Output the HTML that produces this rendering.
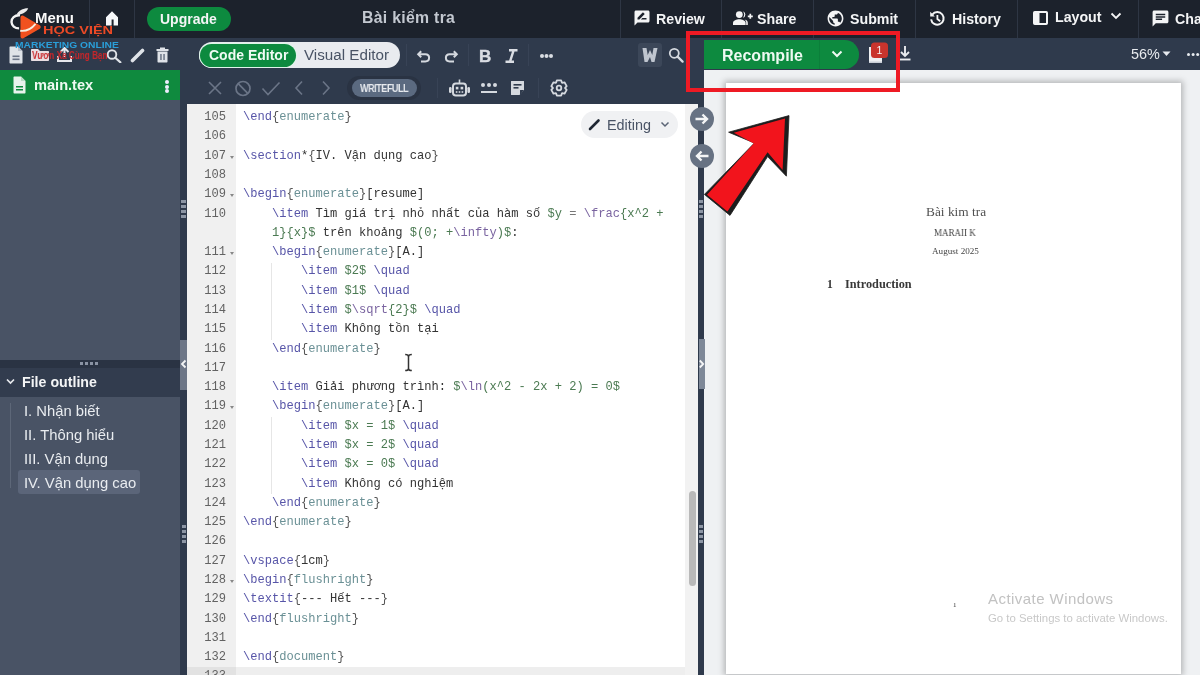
<!DOCTYPE html>
<html><head><meta charset="utf-8">
<style>
*{margin:0;padding:0;box-sizing:border-box}
html,body{width:1200px;height:675px;overflow:hidden;background:#2f3a4c;font-family:"Liberation Sans",sans-serif;-webkit-font-smoothing:antialiased}
body>*{will-change:transform}
.a{position:absolute}
#top{left:0;top:0;width:1200px;height:38px;background:#1c222c}
.vd{position:absolute;top:0;width:1px;height:38px;background:#2e3644}
.tb{position:absolute;color:#f4f5f6;font-weight:bold;font-size:15px;white-space:nowrap}
#side{left:0;top:38px;width:180px;height:637px;background:#495365}
#stool{left:0;top:38px;width:180px;height:32px;background:#2f3a4c}
#mainrow{left:0;top:70px;width:180px;height:30px;background:#0f8a3e}
#strip{left:180px;top:38px;width:7px;height:637px;background:#2f3a4c}
#etool{left:187px;top:38px;width:511px;height:66px;background:#2f3a4c}
#editor{left:187px;top:104px;width:511px;height:571px;background:#fff;overflow:hidden}
#gutter{left:0;top:0;width:49px;height:571px;background:#f0f0f0}
#vtrack{left:498px;top:0;width:13px;height:571px;background:#f2f2f2}
#div2{left:698px;top:38px;width:6px;height:637px;background:#2f3a4c}
#ptool{left:704px;top:38px;width:496px;height:32px;background:#2f3a4c}
#pview{left:704px;top:70px;width:496px;height:605px;background:#eff1f3}
#page{left:726px;top:83px;width:455px;height:591px;background:#fff;box-shadow:0 0 6px 2px rgba(0,0,0,.25)}
#gl{left:1px;top:4.2px;width:49px}
#cd{left:56px;top:4.2px;width:440px}
.ln,.cl{height:19.29px;line-height:19.29px;font-family:"Liberation Mono",monospace;font-size:12.08px;white-space:pre}
.ln{color:#626262;text-align:right;padding-right:11px;position:relative}
.fd{position:absolute;right:3px;top:9px;width:0;height:0;border-left:2.5px solid transparent;border-right:2.5px solid transparent;border-top:3px solid #888}
.cl{color:#333}
.k{color:#5755a8}.b{color:#555}.e{color:#6a9095}.m{color:#4b7a52}.mk{color:#7a64a0}.o{color:#777}
.act{left:0;width:498px;height:19.29px;background:#eeeeee}
.ol{position:absolute;left:24px;height:22px;line-height:20px;font-size:14.8px;color:#e9ecf0;white-space:nowrap}
</style></head><body>
<div id="top" class="a">
<div class="vd" style="left:89px"></div><div class="vd" style="left:134px"></div>
<div class="vd" style="left:620px"></div><div class="vd" style="left:721px"></div><div class="vd" style="left:813px"></div><div class="vd" style="left:915px"></div><div class="vd" style="left:1017px"></div><div class="vd" style="left:1138px"></div>
<svg class="a" style="left:104px;top:10px" width="16" height="16" viewBox="0 0 16 16"><path d="M2 7.2L8 1.3l6 5.9V15.5H9.6V9.5H7.6v6H2z" fill="#f6f8fa"/></svg>
<div class="a" style="left:147px;top:7px;width:84px;height:24px;border-radius:12px;background:#0d8a3f"></div>
<div class="tb" style="left:160px;top:8.8px;font-size:14px;line-height:20px">Upgrade</div>
<div class="tb" style="left:362px;top:6.8px;font-size:15.8px;line-height:22px;color:#c3c8d0;letter-spacing:0.3px">Bài kiểm tra</div>
<svg class="a" style="left:633px;top:9px" width="18" height="18" viewBox="0 0 24 24"><path fill="#f4f5f6" d="M20 2H4c-1.1 0-1.99.9-1.99 2L2 22l4-4h14c1.1 0 2-.9 2-2V4c0-1.1-.9-2-2-2zM6 14v-2.47l6.88-6.88c.2-.2.51-.2.71 0l1.770 1.77c.2.2.2.51 0 .71L8.47 14H6zm12 0h-7.5l2-2H18v2z"/></svg>
<div class="tb" style="left:656px;top:9px;font-size:14.2px;line-height:20px">Review</div>
<svg class="a" style="left:732px;top:10px" width="21" height="16" viewBox="0 0 21 16"><path d="M10.800 1.200a3.400 3.400 0 0 1 0 6.600 4.600 4.600 0 0 0 0-6.600z" fill="#f4f5f6"/><circle cx="7.300" cy="4.600" r="3.400" fill="#f4f5f6"/><path d="M1 15v-2.200c0-2.200 3.600-3.500 6.300-3.500s6.300 1.300 6.300 3.500V15z" fill="#f4f5f6"/><path d="M12.600 9.600c1.800.4 3.200 1.500 3.200 3.200V15h-1.600v-2.200c0-1.300-.6-2.400-1.600-3.200z" fill="#f4f5f6"/><path d="M18.300 3.800v5M15.800 6.300h5" stroke="#f4f5f6" stroke-width="1.7"/></svg>
<div class="tb" style="left:757px;top:9px;font-size:14.2px;line-height:20px">Share</div>
<svg class="a" style="left:826px;top:9px" width="19" height="19" viewBox="0 0 24 24"><path fill="#f4f5f6" d="M12 2C6.48 2 2 6.48 2 12s4.48 10 10 10 10-4.48 10-10S17.52 2 12 2zm-1 17.930c-3.95-.49-7-3.85-7-7.93 0-.62.08-1.21.21-1.79L9 15v1c0 1.1.9 2 2 2v1.93zm6.9-2.54c-.26-.81-1-1.39-1.9-1.39h-1v-3c0-.55-.45-1-1-1H8v-2h2c.55 0 1-.45 1-1V7h2c1.1 0 2-.9 2-2v-.41c2.93 1.19 5 4.06 5 7.41 0 2.08-.8 3.97-2.1 5.39z"/></svg>
<div class="tb" style="left:850px;top:9px;font-size:14.2px;line-height:20px">Submit</div>
<svg class="a" style="left:929px;top:10px" width="17" height="17" viewBox="0 0 17 17"><path d="M3.300 4.600A6.300 6.300 0 1 1 2.100 9.300" fill="none" stroke="#f4f5f6" stroke-width="2"/><path d="M1.200 1.800v4.600h4.600z" fill="#f4f5f6"/><path d="M8.400 5v4l2.800 2.200" fill="none" stroke="#f4f5f6" stroke-width="1.8"/></svg>
<div class="tb" style="left:952px;top:9px;font-size:14.2px;line-height:20px">History</div>
<svg class="a" style="left:1033px;top:11px" width="15" height="14" viewBox="0 0 15 14"><rect x="1" y="1" width="13" height="12" rx="0.8" fill="none" stroke="#f4f5f6" stroke-width="2"/><rect x="1" y="1" width="5.5" height="12" fill="#f4f5f6"/></svg>
<div class="tb" style="left:1055px;top:7px;font-size:14.2px;line-height:20px">Layout</div>
<svg class="a" style="left:1110px;top:12px" width="12" height="8" viewBox="0 0 12 8"><path d="M1.5 1.5l4.5 4.5 4.5-4.5" fill="none" stroke="#f4f5f6" stroke-width="1.8"/></svg>
<svg class="a" style="left:1151px;top:9px" width="19" height="19" viewBox="0 0 24 24"><path fill="#f4f5f6" d="M20 2H4c-1.1 0-1.99.9-1.99 2L2 22l4-4h14c1.1 0 2-.9 2-2V4c0-1.1-.9-2-2-2zM6 9h12v2H6V9zm8 5H6v-2h8v2zm4-6H6V6h12v2z"/></svg>
<div class="tb" style="left:1175px;top:9px;font-size:14.2px;line-height:20px">Chat</div>
</div>

<div id="side" class="a"></div>
<div id="stool" class="a"></div>
<div id="mainrow" class="a"></div>
<!-- sidebar toolbar icons -->
<svg class="a" style="left:9px;top:46px" width="14" height="18" viewBox="0 0 14 18"><path d="M1.5 0.5h7.5l4.5 4.5v11.5c0 .6-.4 1-1 1h-11c-.6 0-1-.4-1-1v-15c0-.6.4-1 1-1z" fill="#dfe3e8"/><path d="M9 .5v4.5h4.5" fill="#b9c0ca"/><rect x="3.5" y="9.5" width="7" height="1.6" fill="#6b7587"/><rect x="3.5" y="12.5" width="7" height="1.6" fill="#6b7587"/></svg>
<svg class="a" style="left:31px;top:49px" width="18" height="12" viewBox="0 0 18 12"><path d="M1 0h6l2 2h8c.6 0 1 .4 1 1v8c0 .6-.4 1-1 1H1c-.6 0-1-.4-1-1V1c0-.6.4-1 1-1z" fill="#e9dfe3"/></svg>
<svg class="a" style="left:57px;top:47px" width="15" height="15" viewBox="0 0 15 15"><path d="M7.5 1v9M3.5 5l4-4 4 4" fill="none" stroke="#e6e8ec" stroke-width="2"/><path d="M1 9v5h13V9" fill="none" stroke="#e6e8ec" stroke-width="2"/></svg>
<svg class="a" style="left:106px;top:49px" width="16" height="14" viewBox="0 0 16 14"><circle cx="6" cy="5.5" r="4.3" fill="none" stroke="#dfe3e8" stroke-width="1.9"/><path d="M9.2 8.7l5.2 4.6" stroke="#dfe3e8" stroke-width="2.2" stroke-linecap="round"/></svg>
<svg class="a" style="left:130px;top:47px" width="17" height="16" viewBox="0 0 17 16"><path d="M2.5 13.5L12.5 3.5" stroke="#dfe3e8" stroke-width="3.6" stroke-linecap="round"/></svg>
<svg class="a" style="left:156px;top:47px" width="13" height="16" viewBox="0 0 13 16"><rect x="0.5" y="2" width="12" height="2" fill="#dfe3e8"/><rect x="4" y="0.5" width="5" height="2" fill="#dfe3e8"/><path d="M1.5 4.5h10v10c0 .6-.4 1-1 1h-8c-.6 0-1-.4-1-1z" fill="#dfe3e8"/><rect x="4.2" y="7" width="1.5" height="6" fill="#6b7587"/><rect x="7.3" y="7" width="1.5" height="6" fill="#6b7587"/></svg>
<!-- main.tex row -->
<svg class="a" style="left:13px;top:76px" width="13" height="18" viewBox="0 0 13 18"><path d="M1.5 .5h6.5l4.5 4.5v11.5c0 .6-.4 1-1 1h-10c-.6 0-1-.4-1-1v-15c0-.6.4-1 1-1z" fill="#e8f3ec"/><path d="M8 .5v4.5h4.5" fill="#b8dcc6"/><rect x="3" y="10" width="7" height="1.5" fill="#0f8a3e"/><rect x="3" y="13" width="7" height="1.5" fill="#0f8a3e"/></svg>
<div class="tb" style="left:34px;top:76px;font-size:14.6px;line-height:18px;color:#eefaf2">main.tex</div>
<div class="a" style="left:165px;top:80px;width:3.5px;height:3.5px;border-radius:2px;background:#eef"></div>
<div class="a" style="left:165px;top:84.5px;width:3.5px;height:3.5px;border-radius:2px;background:#eef"></div>
<div class="a" style="left:165px;top:89px;width:3.5px;height:3.5px;border-radius:2px;background:#eef"></div>
<!-- outline -->
<div class="a" style="left:0;top:360px;width:180px;height:8px;background:#2a3343"></div>
<div class="a" style="left:80px;top:362px;width:18px;height:3px;background:repeating-linear-gradient(90deg,#8a93a3 0 3px,transparent 3px 5px)"></div>
<div class="a" style="left:0;top:368px;width:180px;height:29px;background:#323c4e"></div>
<svg class="a" style="left:6px;top:378px" width="9" height="7" viewBox="0 0 9 7"><path d="M1 1.5l3.5 3.5 3.5-3.5" fill="none" stroke="#e6e8ec" stroke-width="1.7"/></svg>
<div class="tb" style="left:22px;top:373px;font-size:14.2px;line-height:18px;color:#f4f5f6">File outline</div>
<div class="a" style="left:10px;top:403px;width:1px;height:85px;background:#5d6778"></div>
<div class="a" style="left:18px;top:470px;width:122px;height:24px;border-radius:3px;background:#5b6579"></div>
<div class="ol" style="top:401px">I. Nhận biết</div>
<div class="ol" style="top:425px">II. Thông hiểu</div>
<div class="ol" style="top:449px">III. Vận dụng</div>
<div class="ol" style="top:473px">IV. Vận dụng cao</div>
<!-- logo watermark -->
<svg class="a" style="left:0;top:0" width="50" height="42" viewBox="0 0 50 42"><path d="M20 15.300C14.500 14.800 11.300 18.300 11.500 22c.2 3.600 3.300 6.400 7.600 6.400" fill="none" stroke="#f4f4f4" stroke-width="2.4"/><path d="M16.500 14.800c1.800-4.200 6.500-6.600 11.700-6.500-1.600 3.900-6.400 6.600-11.700 6.500z" fill="#ececec"/><path d="M20.500 17.500c0-1.700 1.500-2.500 2.900-1.700l16.300 9.400c1.400.8 1.400 2.700 0 3.500l-16.300 9.500c-1.400.8-2.900 0-2.900-1.700z" fill="#f1511f"/><path d="M20.200 30.800c5.500.6 10.800-1.300 15.300-7" fill="none" stroke="#f6eee0" stroke-width="1.9"/></svg>
<div class="tb" style="left:35px;top:9px;font-size:14.5px;line-height:18px;color:#fafafa;letter-spacing:0px;transform-origin:0 0;transform:scaleX(1.03)">Menu</div>
<div class="a" style="left:43px;top:25px;font-size:10px;line-height:11px;font-weight:bold;color:#ec4a26;white-space:nowrap;transform-origin:0 0;transform:scaleX(1.45)">HỌC VIỆN</div>
<div class="a" style="left:15px;top:40px;font-size:9.6px;line-height:10px;font-weight:bold;color:#2a9ed8;white-space:nowrap;transform-origin:0 0;transform:scaleX(1.07)">MARKETING ONLINE</div>
<div class="a" style="left:32px;top:49px;font-size:10.5px;line-height:12px;font-weight:bold;color:#c8262a;white-space:nowrap;transform-origin:0 0;transform:scaleX(0.78)">Vươn Xa Cùng Bạn</div>

<div id="strip" class="a"></div>
<div id="etool" class="a"></div>
<!-- toggle -->
<div class="a" style="left:199px;top:42px;width:201px;height:26px;border-radius:13px;background:#e9ebef"></div>
<div class="a" style="left:200px;top:43.5px;width:96px;height:23px;border-radius:12px;background:#0d8a3f;box-shadow:0 0 0 1px #dff5ea"></div>
<div class="tb" style="left:209px;top:46px;font-size:14px;line-height:18px;color:#f0fbf4">Code Editor</div>
<div class="a" style="left:304px;top:46px;font-size:15.2px;line-height:18px;color:#495365;white-space:nowrap">Visual Editor</div>
<div class="a" style="left:406px;top:44px;width:1px;height:22px;background:#384356"></div>
<svg class="a" style="left:416px;top:50px" width="16" height="13" viewBox="0 0 16 13"><path d="M5.2 1.2L2.2 4.2l3 3" fill="none" stroke="#d5d9df" stroke-width="2"/><path d="M2.5 4.2h6.8c2.300 0 3.8 1.600 3.8 3.6s-1.5 3.6-3.8 3.6H5" fill="none" stroke="#d5d9df" stroke-width="2"/></svg>
<svg class="a" style="left:443px;top:50px" width="16" height="13" viewBox="0 0 16 13"><path d="M10.8 1.2l3 3-3 3" fill="none" stroke="#d5d9df" stroke-width="2"/><path d="M13.5 4.2H6.7C4.4 4.2 2.900 5.8 2.900 7.8s1.5 3.6 3.8 3.6H11" fill="none" stroke="#d5d9df" stroke-width="2"/></svg>
<div class="a" style="left:468px;top:44px;width:1px;height:22px;background:#384356"></div>
<div class="a" style="left:479px;top:47px;font-size:17px;line-height:20px;font-weight:bold;color:#dadde3;-webkit-text-stroke:0.4px #dadde3">B</div>
<svg class="a" style="left:504px;top:49px" width="15" height="14" viewBox="0 0 15 14"><path d="M5 1.3h8.5M1.5 12.7H10M9.600 1.300l-3.6 11.4" fill="none" stroke="#dadde3" stroke-width="2.4"/></svg>
<div class="a" style="left:528px;top:44px;width:1px;height:22px;background:#384356"></div>
<div class="a" style="left:540px;top:53.8px;width:3.6px;height:3.6px;border-radius:2px;background:#dadde3;box-shadow:4.5px 0 0 #dadde3,9px 0 0 #dadde3"></div>
<div class="a" style="left:638px;top:43px;width:24px;height:24px;border-radius:3px;background:#3c4759"></div>
<svg class="a" style="left:641px;top:46px" width="18" height="18" viewBox="0 0 18 18"><path d="M1.5 2h4l1.2 7 2.3-5 2.300 5 1.2-7h4l-3 14h-3L9 11l-2.500 5h-3z" fill="#bfc5cf"/></svg>
<svg class="a" style="left:668px;top:47px" width="16" height="16" viewBox="0 0 16 16"><circle cx="6.3" cy="6.3" r="4.5" fill="none" stroke="#d5d9df" stroke-width="1.8"/><path d="M9.6 9.6l5 5" stroke="#d5d9df" stroke-width="2.2" stroke-linecap="round"/></svg>
<!-- row 2 -->
<svg class="a" style="left:207px;top:80px" width="16" height="16" viewBox="0 0 16 16"><path d="M2 2l12 12M14 2L2 14" stroke="#6b7587" stroke-width="1.6"/></svg>
<svg class="a" style="left:234px;top:80px" width="18" height="17" viewBox="0 0 18 17"><circle cx="9" cy="8.5" r="7" fill="none" stroke="#6b7587" stroke-width="1.7"/><path d="M4.2 3.7l9.6 9.6" stroke="#6b7587" stroke-width="1.7"/></svg>
<svg class="a" style="left:261px;top:81px" width="20" height="15" viewBox="0 0 20 15"><path d="M1.5 7.5l5.5 6L18.500 1.5" fill="none" stroke="#6b7587" stroke-width="1.6"/></svg>
<svg class="a" style="left:293px;top:80px" width="12" height="16" viewBox="0 0 12 16"><path d="M9 1.5L3 8l6 6.5" fill="none" stroke="#6b7587" stroke-width="1.6"/></svg>
<svg class="a" style="left:320px;top:80px" width="12" height="16" viewBox="0 0 12 16"><path d="M3 1.5L9 8l-6 6.5" fill="none" stroke="#6b7587" stroke-width="1.6"/></svg>
<div class="a" style="left:347px;top:76px;width:74px;height:24px;border-radius:12px;background:#2a3343"></div>
<div class="a" style="left:352px;top:79px;width:65px;height:18px;border-radius:9px;background:#5b6a80"></div>
<div class="a" style="left:360px;top:82px;font-size:10.6px;line-height:12px;color:#e8ebef;white-space:nowrap;letter-spacing:-0.5px;font-weight:bold;transform-origin:0 0;transform:scaleX(0.85)">WRITEFULL</div>
<div class="a" style="left:437px;top:78px;width:1px;height:20px;background:#384356"></div>
<svg class="a" style="left:448px;top:79px" width="23" height="18" viewBox="0 0 23 18"><rect x="5" y="4.5" width="13" height="12" rx="2.8" fill="none" stroke="#d5d9df" stroke-width="2"/><rect x="1" y="8" width="2.6" height="6" rx="1.2" fill="#d5d9df"/><rect x="19.4" y="8" width="2.6" height="6" rx="1.2" fill="#d5d9df"/><rect x="10.7" y="0.5" width="1.6" height="4" fill="#d5d9df"/><rect x="7.8" y="7.8" width="2.6" height="2.6" fill="#d5d9df"/><rect x="12.6" y="7.8" width="2.6" height="2.6" fill="#d5d9df"/><rect x="7.8" y="12.2" width="1.6" height="1.6" fill="#d5d9df"/><rect x="10.7" y="12.2" width="1.6" height="1.6" fill="#d5d9df"/><rect x="13.6" y="12.2" width="1.6" height="1.6" fill="#d5d9df"/></svg>
<svg class="a" style="left:480px;top:81px" width="18" height="14" viewBox="0 0 18 14"><circle cx="3" cy="4" r="2" fill="#d5d9df"/><circle cx="9" cy="4" r="2" fill="#d5d9df"/><circle cx="15" cy="4" r="2" fill="#d5d9df"/><rect x="1" y="10" width="16" height="2" fill="#d5d9df"/></svg>
<svg class="a" style="left:510px;top:80px" width="15" height="16" viewBox="0 0 15 16"><path d="M1.5 1h12c.5 0 .5.5.5.5V10l-4.5 5H1.5c-.5 0-.5-.5-.5-.5V1.5c0-.5.5-.5.5-.5z" fill="#d5d9df"/><rect x="3.5" y="4" width="8" height="1.6" fill="#2f3a4c"/><rect x="3.5" y="7" width="5" height="1.6" fill="#2f3a4c"/><path d="M14 10h-3.5c-.5 0-.5.5-.5.5V15z" fill="#2f3a4c"/></svg>
<div class="a" style="left:538px;top:78px;width:1px;height:20px;background:#384356"></div>
<svg class="a" style="left:550px;top:79px" width="18" height="18" viewBox="0 0 18 18"><path d="M6.08 3.65 L6.82 1.41 L11.18 1.41 L11.92 3.65 L12.17 3.79 L14.48 3.31 L16.67 7.09 L15.10 8.86 L15.10 9.14 L16.67 10.91 L14.48 14.69 L12.17 14.21 L11.92 14.35 L11.18 16.59 L6.82 16.59 L6.08 14.35 L5.83 14.21 L3.52 14.69 L1.33 10.91 L2.90 9.14 L2.90 8.86 L1.33 7.09 L3.52 3.31 L5.83 3.79Z" fill="none" stroke="#d5d9df" stroke-width="1.8" stroke-linejoin="round"/><circle cx="9" cy="9" r="2.3" fill="none" stroke="#d5d9df" stroke-width="1.8"/></svg>

<div id="editor" class="a"><div id="gutter" class="a"></div>
<div class="a act" style="top:563.2px"></div><div class="a" style="left:0;top:563.2px;width:49px;height:19.3px;background:#e2e2e2"></div>
<div class="a" style="left:84px;top:158.5px;width:1px;height:77.2px;background:#e6e6e6"></div>
<div class="a" style="left:84px;top:312.8px;width:1px;height:77.2px;background:#e6e6e6"></div>
<div id="gl" class="a">
<div class="ln">105</div>
<div class="ln">106</div>
<div class="ln">107<i class="fd"></i></div>
<div class="ln">108</div>
<div class="ln">109<i class="fd"></i></div>
<div class="ln">110</div>
<div class="ln"></div>
<div class="ln">111<i class="fd"></i></div>
<div class="ln">112</div>
<div class="ln">113</div>
<div class="ln">114</div>
<div class="ln">115</div>
<div class="ln">116</div>
<div class="ln">117</div>
<div class="ln">118</div>
<div class="ln">119<i class="fd"></i></div>
<div class="ln">120</div>
<div class="ln">121</div>
<div class="ln">122</div>
<div class="ln">123</div>
<div class="ln">124</div>
<div class="ln">125</div>
<div class="ln">126</div>
<div class="ln">127</div>
<div class="ln">128<i class="fd"></i></div>
<div class="ln">129</div>
<div class="ln">130</div>
<div class="ln">131</div>
<div class="ln">132</div>
<div class="ln">133</div>
</div>
<div id="cd" class="a">
<div class="cl"><span class="k">\end</span><span class="b">{</span><span class="e">enumerate</span><span class="b">}</span>&#8203;</div>
<div class="cl">&#8203;</div>
<div class="cl"><span class="k">\section</span>*<span class="b">{</span>IV. Vận dụng cao<span class="b">}</span>&#8203;</div>
<div class="cl">&#8203;</div>
<div class="cl"><span class="k">\begin</span><span class="b">{</span><span class="e">enumerate</span><span class="b">}</span>[resume]&#8203;</div>
<div class="cl">    <span class="k">\item</span> Tìm giá trị nhỏ nhất của hàm số <span class="m">$y </span><span class="o">= </span><span class="mk">\frac</span><span class="m">{x^2 +</span>&#8203;</div>
<div class="cl">    <span class="m">1}{x}$</span> trên khoảng <span class="m">$(0; +</span><span class="mk">\infty</span><span class="m">)$</span>:&#8203;</div>
<div class="cl">    <span class="k">\begin</span><span class="b">{</span><span class="e">enumerate</span><span class="b">}</span>[A.]&#8203;</div>
<div class="cl">        <span class="k">\item</span> <span class="m">$2$</span> <span class="k">\quad</span>&#8203;</div>
<div class="cl">        <span class="k">\item</span> <span class="m">$1$</span> <span class="k">\quad</span>&#8203;</div>
<div class="cl">        <span class="k">\item</span> <span class="m">$</span><span class="mk">\sqrt</span><span class="m">{2}$</span> <span class="k">\quad</span>&#8203;</div>
<div class="cl">        <span class="k">\item</span> Không tồn tại&#8203;</div>
<div class="cl">    <span class="k">\end</span><span class="b">{</span><span class="e">enumerate</span><span class="b">}</span>&#8203;</div>
<div class="cl">&#8203;</div>
<div class="cl">    <span class="k">\item</span> Giải phương trình: <span class="m">$</span><span class="mk">\ln</span><span class="m">(x^2 - 2x + 2) = 0$</span>&#8203;</div>
<div class="cl">    <span class="k">\begin</span><span class="b">{</span><span class="e">enumerate</span><span class="b">}</span>[A.]&#8203;</div>
<div class="cl">        <span class="k">\item</span> <span class="m">$x = 1$</span> <span class="k">\quad</span>&#8203;</div>
<div class="cl">        <span class="k">\item</span> <span class="m">$x = 2$</span> <span class="k">\quad</span>&#8203;</div>
<div class="cl">        <span class="k">\item</span> <span class="m">$x = 0$</span> <span class="k">\quad</span>&#8203;</div>
<div class="cl">        <span class="k">\item</span> Không có nghiệm&#8203;</div>
<div class="cl">    <span class="k">\end</span><span class="b">{</span><span class="e">enumerate</span><span class="b">}</span>&#8203;</div>
<div class="cl"><span class="k">\end</span><span class="b">{</span><span class="e">enumerate</span><span class="b">}</span>&#8203;</div>
<div class="cl">&#8203;</div>
<div class="cl"><span class="k">\vspace</span><span class="b">{</span>1cm<span class="b">}</span>&#8203;</div>
<div class="cl"><span class="k">\begin</span><span class="b">{</span><span class="e">flushright</span><span class="b">}</span>&#8203;</div>
<div class="cl"><span class="k">\textit</span><span class="b">{</span>--- Hết ---<span class="b">}</span>&#8203;</div>
<div class="cl"><span class="k">\end</span><span class="b">{</span><span class="e">flushright</span><span class="b">}</span>&#8203;</div>
<div class="cl">&#8203;</div>
<div class="cl"><span class="k">\end</span><span class="b">{</span><span class="e">document</span><span class="b">}</span>&#8203;</div>
<div class="cl">&#8203;</div>
</div>
<div id="vtrack" class="a"></div></div>
<div id="div2" class="a"></div>
<div id="ptool" class="a"></div>
<div class="a" style="left:704px;top:40px;width:155px;height:28.6px;border-radius:0 14.3px 14.3px 0;background:#0d8a3f"></div>
<div class="a" style="left:819px;top:40px;width:1px;height:29px;background:#0b7f3a"></div>
<div class="tb" style="left:721.5px;top:45.5px;font-size:16px;line-height:19px;color:#eefaf2">Recompile</div>
<svg class="a" style="left:831px;top:50px" width="12" height="8" viewBox="0 0 12 8"><path d="M1.5 1.5l4.5 4.5 4.5-4.5" fill="none" stroke="#eefaf2" stroke-width="2"/></svg>
<svg class="a" style="left:868px;top:42px" width="22" height="23" viewBox="0 0 22 23"><path d="M1 5h13v16H1z" fill="#eef0f3"/><path d="M1 19.5h13V21H1z" fill="#c9ced6"/><rect x="3" y="0.5" width="17" height="15.5" rx="3.5" fill="#c9342d"/><text x="11.5" y="11.5" font-size="10.5" font-family="Liberation Sans" fill="#f4f4f4" text-anchor="middle">1</text></svg>
<svg class="a" style="left:898px;top:45px" width="14" height="17" viewBox="0 0 14 17"><path d="M7 1v10M3 7l4 4 4-4" fill="none" stroke="#e8ebef" stroke-width="1.9"/><path d="M1.5 14.5h11" stroke="#e8ebef" stroke-width="1.9"/></svg>
<div class="a" style="left:1131px;top:45px;font-size:14.4px;line-height:19px;color:#e8ebef;white-space:nowrap">56%</div>
<svg class="a" style="left:1162px;top:51px" width="9" height="6" viewBox="0 0 9 6"><path d="M0.5 0.5h8L4.5 5z" fill="#e8ebef"/></svg>
<div class="a" style="left:1187px;top:53px;width:3.2px;height:3.2px;border-radius:2px;background:#e8ebef;box-shadow:4.6px 0 0 #e8ebef,9.2px 0 0 #e8ebef"></div>
<div id="pview" class="a"></div>
<div id="page" class="a"></div>
<div class="a" style="left:926px;top:204.5px;font-family:'Liberation Serif',serif;font-size:12.6px;line-height:14px;color:#505050;white-space:nowrap;transform-origin:0 0;transform:scaleX(1.06)">Bài kim tra</div>
<div class="a" style="left:933.5px;top:227.5px;font-family:'Liberation Serif',serif;font-size:9.6px;line-height:10px;color:#444;white-space:nowrap;transform-origin:0 0;transform:scaleX(0.94)">MARAII K</div>
<div class="a" style="left:932px;top:247px;font-family:'Liberation Serif',serif;font-size:8.3px;line-height:10px;color:#444;white-space:nowrap;transform-origin:0 0;transform:scaleX(1.1)">August 2025</div>
<div class="a" style="left:827px;top:277.5px;font-family:'Liberation Serif',serif;font-size:11.6px;line-height:13px;color:#383838;font-weight:bold;white-space:nowrap">1</div>
<div class="a" style="left:845px;top:277.5px;font-family:'Liberation Serif',serif;font-size:11.6px;line-height:13px;color:#383838;font-weight:bold;white-space:nowrap;transform-origin:0 0;transform:scaleX(1.06)">Introduction</div>
<div class="a" style="left:953px;top:601px;font-family:'Liberation Serif',serif;font-size:7px;line-height:8px;color:#333">1</div>
<div class="a" style="left:988px;top:590px;font-size:15px;line-height:18px;color:#c2c2c2;white-space:nowrap;letter-spacing:0.45px">Activate Windows</div>
<div class="a" style="left:988px;top:610.5px;font-size:11.4px;line-height:14px;color:#c8c8c8;white-space:nowrap">Go to Settings to activate Windows.</div>

<!-- strip handles -->
<div class="a" style="left:181px;top:200px;width:5px;height:18px;background:repeating-linear-gradient(180deg,#8d96a5 0 3px,transparent 3px 5px)"></div>
<div class="a" style="left:180px;top:339.5px;width:7px;height:49.5px;background:#6d7687"></div>
<svg class="a" style="left:180px;top:359px" width="7" height="10" viewBox="0 0 7 10"><path d="M5.5 1.5L2 5l3.5 3.5" fill="none" stroke="#f4f5f6" stroke-width="1.8"/></svg>
<div class="a" style="left:181.5px;top:525px;width:4px;height:18px;background:repeating-linear-gradient(180deg,#8d96a5 0 3px,transparent 3px 5px)"></div>
<!-- editor right divider handles -->
<div class="a" style="left:699px;top:200px;width:4px;height:18px;background:repeating-linear-gradient(180deg,#8d96a5 0 3px,transparent 3px 5px)"></div>
<div class="a" style="left:698.5px;top:339px;width:6px;height:50px;background:#7e8898"></div>
<svg class="a" style="left:698px;top:359px" width="7" height="10" viewBox="0 0 7 10"><path d="M1.8 1.5L5.2 5 1.8 8.5" fill="none" stroke="#f4f5f6" stroke-width="1.8"/></svg>
<div class="a" style="left:699px;top:525px;width:4px;height:18px;background:repeating-linear-gradient(180deg,#8d96a5 0 3px,transparent 3px 5px)"></div>
<div class="a" style="left:690px;top:107px;width:24px;height:24px;border-radius:12px;background:#677283"></div>
<svg class="a" style="left:694px;top:112px" width="16" height="14" viewBox="0 0 16 14"><path d="M1.5 7h11M8.5 2.5L13 7l-4.5 4.5" fill="none" stroke="#f4f5f6" stroke-width="2.4"/></svg>
<div class="a" style="left:690px;top:144px;width:24px;height:24px;border-radius:12px;background:#677283"></div>
<svg class="a" style="left:694px;top:149px" width="16" height="14" viewBox="0 0 16 14"><path d="M14.5 7h-11M7.5 2.5L3 7l4.5 4.5" fill="none" stroke="#f4f5f6" stroke-width="2.4"/></svg>
<!-- scrollbar thumb -->
<div class="a" style="left:689px;top:491px;width:6.5px;height:95px;border-radius:3.5px;background:#b9b9b9"></div>
<!-- Editing pill -->
<div class="a" style="left:581px;top:111px;width:97px;height:27px;border-radius:13.5px;background:#f0f1f3"></div>
<svg class="a" style="left:588px;top:118px" width="13" height="13" viewBox="0 0 13 13"><path d="M2 11L10.500 2.5" stroke="#1f2733" stroke-width="2.6" stroke-linecap="round"/><path d="M1 12l1.300-3 1.700 1.700z" fill="#1f2733"/></svg>
<div class="a" style="left:607px;top:116px;font-size:14.4px;line-height:18px;color:#495365;white-space:nowrap">Editing</div>
<svg class="a" style="left:660px;top:121px" width="10" height="7" viewBox="0 0 10 7"><path d="M1.5 1.5L5 5l3.500-3.5" fill="none" stroke="#5a6475" stroke-width="1.5"/></svg>
<!-- text cursor -->
<svg class="a" style="left:404px;top:353px" width="9" height="19" viewBox="0 0 9 19"><path d="M1.2 1.6c1.800 0 3.300.6 3.300 2.200M7.8 1.600c-1.800 0-3.300.6-3.300 2.200V15.400c0 1.600-1.500 2.200-3.300 2.200M4.500 15.400c0 1.600 1.500 2.200 3.300 2.200" fill="none" stroke="#333" stroke-width="1.5"/></svg>
<!-- red highlight box -->
<div class="a" style="left:686.3px;top:30.5px;width:213.7px;height:61.3px;border:4.5px solid #ee1a24"></div>
<!-- red arrow -->
<svg class="a" style="left:690px;top:100px" width="110" height="125" viewBox="690 100 110 125"><path d="M789 115.6L728.6 132.2 754.4 143 704.4 194.4 730 215.4 767.6 156.6 786.4 176.2z" fill="#1d1d1d" stroke="#1d1d1d" stroke-width="0.8" stroke-linejoin="miter"/><path d="M785 118.6L733.8 132.8 753.8 143.4 707 194.8 727.4 211.6 767.6 152.2 782.6 170z" fill="#f2141c"/></svg>

</body></html>
